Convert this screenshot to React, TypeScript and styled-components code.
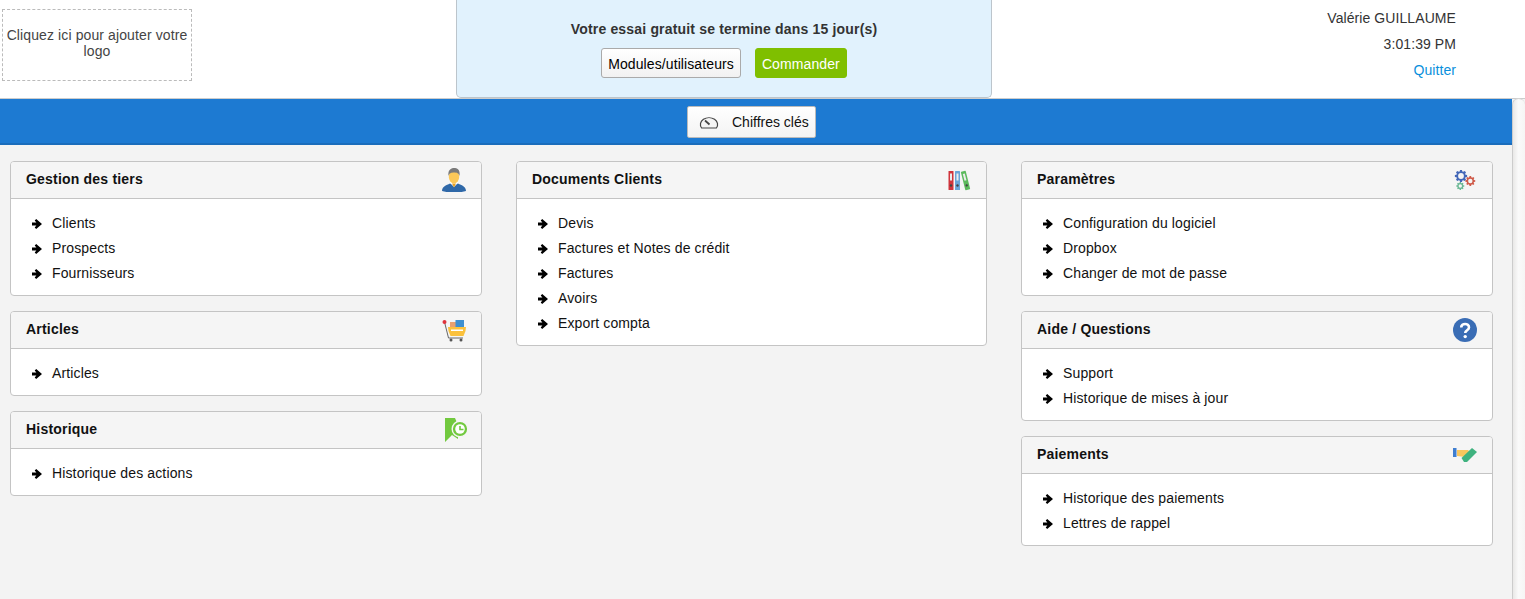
import React from 'react';
import styled, { createGlobalStyle } from 'styled-components';

const GlobalStyle = createGlobalStyle`
  html, body {
    margin: 0;
    padding: 0;
    height: 100%;
    overflow: hidden;
    background: #f3f3f3;
    font-family: "Liberation Sans", Arial, sans-serif;
    font-size: 14px;
    letter-spacing: 0.13px;
    color: #333;
  }
  * { box-sizing: border-box; }
`;

const Page = styled.div`
  width: 1525px;
  height: 599px;
  display: flex;
  flex-direction: column;
`;

const TopBar = styled.header`
  height: 99px;
  flex: none;
  display: flex;
  align-items: flex-start;
  background: #fff;
  border-bottom: 1px solid #ccc;
`;

const LogoSlot = styled.div`
  width: 456px;
  flex: none;
  padding: 9px 0 0 2px;
`;

const LogoBox = styled.div`
  width: 190px;
  height: 72px;
  padding: 17px 0 0;
  border: 1px dashed #bbb;
  text-align: center;
  line-height: 16px;
  letter-spacing: 0.11px;
  color: #444;
`;

const TrialBox = styled.div`
  width: 536px;
  height: 98px;
  flex: none;
  padding-top: 21px;
  background: #e1f2fd;
  border: 1px solid #bcc5cc;
  border-top: none;
  border-radius: 0 0 5px 5px;
  text-align: center;
`;

const TrialText = styled.div`
  font-weight: bold;
  line-height: 16px;
  letter-spacing: 0.175px;
`;

const TrialActions = styled.div`
  display: flex;
  justify-content: center;
  gap: 14px;
  margin-top: 11px;
`;

const TrialButton = styled.button<{ $primary?: boolean }>`
  height: 30px;
  padding: 1px 6px 0;
  font: inherit;
  letter-spacing: 0.1px;
  color: ${(p) => (p.$primary ? '#fff' : '#000')};
  background: ${(p) => (p.$primary ? '#7fbf00' : 'linear-gradient(#fff, #f1f1f1)')};
  border: 1px solid ${(p) => (p.$primary ? '#7fbf00' : '#aaa')};
  border-radius: 3px;
`;

const UserBox = styled.div`
  flex: 1;
  padding: 5px 69px 0 0;
  text-align: right;
  line-height: 26px;
  letter-spacing: 0.08px;
`;

const QuitLink = styled.a`
  color: #0a8fdc;
  text-decoration: none;
`;

const Body = styled.div`
  flex: 1;
  display: flex;
  min-height: 0;
`;

const Main = styled.main`
  flex: 1;
  min-width: 0;
`;

const Scrollbar = styled.div`
  width: 13px;
  flex: none;
  margin-top: -1px;
  background: linear-gradient(90deg, #e9e8e7, #fafafa 45%, #f6f5f4);
  border-left: 1px solid #ccc;
  border-top: 1px solid #d4d4d4;
  border-radius: 7px 7px 0 0;
`;

const KeyBar = styled.div`
  height: 46px;
  display: flex;
  justify-content: center;
  padding: 7px 9px 0 0;
  background: #1d7ad2;
  border-bottom: 2px solid #1a6cbb;
`;

const KeyButton = styled.button`
  width: 129px;
  height: 32px;
  display: flex;
  align-items: center;
  gap: 13px;
  padding: 0 0 0 11px;
  font: inherit;
  letter-spacing: 0;
  color: #111;
  background: linear-gradient(#fff, #f3f3f3);
  border: 1px solid #bbb;
  border-radius: 2px;
`;

const Columns = styled.div`
  display: grid;
  grid-template-columns: 472px 471px 472px;
  column-gap: 34px;
  align-items: start;
  padding: 16px 0 0 10px;
`;

const Column = styled.div`
  display: flex;
  flex-direction: column;
  gap: 15px;
`;

const Panel = styled.section`
  background: #fff;
  border: 1px solid #c4c4c4;
  border-radius: 4px;
  overflow: hidden;
`;

const PanelHead = styled.div`
  height: 37px;
  display: flex;
  align-items: center;
  justify-content: space-between;
  padding: 0 7px 0 15px;
  background: #f5f5f5;
  border-bottom: 1px solid #c4c4c4;
`;

const PanelTitle = styled.h3`
  margin: 0 0 2px;
  font-size: 14px;
  font-weight: bold;
  color: #111;
  letter-spacing: 0.2px;
`;

const IconSlot = styled.div`
  width: 40px;
  height: 30px;
  display: flex;
  align-items: center;
  justify-content: center;
`;

const LinkList = styled.ul`
  list-style: none;
  margin: 0;
  padding: 11px 0 10px 21px;
`;

const LinkItem = styled.li`
  height: 25px;
  display: flex;
  align-items: center;
  gap: 10px;
  color: #111;
`;

const ArrowGlyph = styled.svg`
  margin-top: 2px;
  flex: none;
`;

const ArrowIcon = () => (
  <ArrowGlyph width="10" height="10" viewBox="0 0 10 10">
    <path d="M0 3.6 H4.4 L2.7 1.5 L4.2 0 L10 5 L4.2 10 L2.7 8.5 L4.4 6.4 H0 Z" fill="#000" />
  </ArrowGlyph>
);

const GaugeIcon = () => (
  <svg width="20" height="14" viewBox="0 0 20 14" fill="none">
    <path d="M2.6 13 A8.6 6.8 0 1 1 17.4 13 Z" fill="#f4f4f4" stroke="#444" strokeWidth="1.2" />
    <path d="M6 5.5 L10.5 9.5" stroke="#444" strokeWidth="1.7" />
  </svg>
);

const PersonIcon = () => (
  <svg width="24" height="24" viewBox="0 0 24 24">
    <path d="M0 23 C0 18 6 16.5 8 15.5 L16 15.5 C18 16.5 24 18 24 23 C18 25 6 25 0 23 Z" fill="#2f68a8" />
    <path d="M8 15 L12 19 L16 15 L15 13 L9 13 Z" fill="#fff" />
    <path d="M10 15.5 L12 19.5 L14 15.5 Z" fill="#e8a020" />
    <ellipse cx="12" cy="9" rx="5.2" ry="6.5" fill="#fbc858" />
    <path d="M6.5 8 C5.5 1 10 0 12 0 C15 0 18.5 1.5 17.5 8 C16.5 5 15 4.5 12 4.5 C9 4.5 7.5 5 6.5 8 Z" fill="#7a7a7a" />
  </svg>
);

const BindersIcon = () => (
  <svg width="26" height="21" viewBox="0 0 26 21">
    <rect x="2.5" y="1" width="5" height="19" rx="0.6" fill="#d0343c" />
    <rect x="4" y="3.5" width="2" height="7" fill="#ececec" />
    <circle cx="5" cy="15.5" r="1.2" fill="#444" />
    <rect x="9" y="1" width="5" height="19" rx="0.6" fill="#6aa5d8" />
    <rect x="10.5" y="3.5" width="2" height="7" fill="#ececec" />
    <circle cx="11.5" cy="15.5" r="1.2" fill="#444" />
    <g transform="rotate(-14 19.5 10.5)">
      <rect x="17" y="1" width="5" height="19" rx="0.6" fill="#5cba5c" />
      <rect x="18.5" y="3.5" width="2" height="7" fill="#ececec" />
      <circle cx="19.5" cy="15.5" r="1.2" fill="#444" />
    </g>
  </svg>
);

const gearPoints = (cx: number, cy: number, outer: number, inner: number, teeth: number) => {
  const pts: string[] = [];
  const step = (Math.PI * 2) / teeth;
  for (let i = 0; i < teeth; i++) {
    const a = i * step;
    [
      [inner, a - step * 0.36],
      [outer, a - step * 0.2],
      [outer, a + step * 0.2],
      [inner, a + step * 0.36],
    ].forEach(([r, t]) => {
      pts.push(`${(cx + r * Math.cos(t)).toFixed(2)},${(cy + r * Math.sin(t)).toFixed(2)}`);
    });
  }
  return pts.join(' ');
};

const Gear = ({ cx, cy, r, hole, color }: { cx: number; cy: number; r: number; hole: number; color: string }) => (
  <g>
    <polygon points={gearPoints(cx, cy, r, r * 0.76, 8)} fill={color} />
    <circle cx={cx} cy={cy} r={hole} fill="#f5f5f5" />
  </g>
);

const GearsIcon = () => (
  <svg width="22" height="22" viewBox="0 0 22 22">
    <Gear cx={7} cy={7} r={6.2} hole={2.9} color="#4468b8" />
    <Gear cx={16.3} cy={12} r={5} hole={2.2} color="#cf5a48" />
    <Gear cx={6.3} cy={17} r={4} hole={1.7} color="#6ab894" />
  </svg>
);

const CartIcon = () => (
  <svg width="24" height="23" viewBox="0 0 24 23">
    <path d="M2.5 3 L6.5 19 L21 19" fill="none" stroke="#666" strokeWidth="1" />
    <circle cx="2.5" cy="3" r="2" fill="#e0323c" />
    <rect x="8" y="3" width="6" height="5" fill="#e8a070" />
    <rect x="13.5" y="1" width="8.5" height="7" fill="#3d8fd0" />
    <path d="M6 8 L24 8 L23.5 12 L21.5 17 L8.5 17 L6.5 12 Z" fill="#fbc13c" />
    <rect x="9" y="10.5" width="12" height="1.5" fill="#fff" />
    <circle cx="9" cy="21" r="1.5" fill="#555" />
    <circle cx="19" cy="21" r="1.5" fill="#555" />
  </svg>
);

const BookmarkClockIcon = () => (
  <svg width="28" height="26" viewBox="0 0 28 26">
    <path d="M5 1 L15 1 L18 8 L18 22 L12 18 L5 25 Z" fill="#72c93f" />
    <circle cx="20" cy="12" r="7.8" fill="#72c93f" stroke="#f5f5f5" strokeWidth="1.4" />
    <circle cx="20" cy="12" r="4.8" fill="#fff" />
    <path d="M20 9 L20 12.5 L23.5 12.5" fill="none" stroke="#72c93f" strokeWidth="1.6" />
  </svg>
);

const HelpIcon = () => (
  <svg width="24" height="24" viewBox="0 0 24 24">
    <circle cx="12" cy="12" r="12" fill="#3a6db5" />
    <path d="M8.2 9.4 C8.2 4.8 16 4.8 16 9.4 C16 12.2 12.2 12.2 12.2 15" fill="none" stroke="#fff" strokeWidth="2.6" />
    <circle cx="12.2" cy="18.6" r="1.7" fill="#fff" />
  </svg>
);

const HandshakeIcon = () => (
  <svg width="24" height="16" viewBox="0 0 24 16">
    <rect x="0" y="1" width="3.5" height="9" fill="#3f7ed0" />
    <path d="M4 3 L15 3 L18 6 L12 10 L4 9 Z" fill="#f9c65d" />
    <path d="M8.5 11 L19 1 L24 5 L14 15 L11 15 Z" fill="#3fb27f" />
  </svg>
);

type PanelData = { title: string; icon: React.ReactNode; links: string[] };

const columns: PanelData[][] = [
  [
    { title: 'Gestion des tiers', icon: <PersonIcon />, links: ['Clients', 'Prospects', 'Fournisseurs'] },
    { title: 'Articles', icon: <CartIcon />, links: ['Articles'] },
    { title: 'Historique', icon: <BookmarkClockIcon />, links: ['Historique des actions'] },
  ],
  [
    {
      title: 'Documents Clients',
      icon: <BindersIcon />,
      links: ['Devis', 'Factures et Notes de crédit', 'Factures', 'Avoirs', 'Export compta'],
    },
  ],
  [
    {
      title: 'Paramètres',
      icon: <GearsIcon />,
      links: ['Configuration du logiciel', 'Dropbox', 'Changer de mot de passe'],
    },
    { title: 'Aide / Questions', icon: <HelpIcon />, links: ['Support', 'Historique de mises à jour'] },
    { title: 'Paiements', icon: <HandshakeIcon />, links: ['Historique des paiements', 'Lettres de rappel'] },
  ],
];

export default function App() {
  return (
    <Page>
      <GlobalStyle />
      <TopBar>
        <LogoSlot>
          <LogoBox>Cliquez ici pour ajouter votre logo</LogoBox>
        </LogoSlot>
        <TrialBox>
          <TrialText>Votre essai gratuit se termine dans 15 jour(s)</TrialText>
          <TrialActions>
            <TrialButton>Modules/utilisateurs</TrialButton>
            <TrialButton $primary>Commander</TrialButton>
          </TrialActions>
        </TrialBox>
        <UserBox>
          <div>Valérie GUILLAUME</div>
          <div>3:01:39 PM</div>
          <QuitLink href="#">Quitter</QuitLink>
        </UserBox>
      </TopBar>
      <Body>
        <Main>
          <KeyBar>
            <KeyButton>
              <GaugeIcon />
              Chiffres clés
            </KeyButton>
          </KeyBar>
          <Columns>
            {columns.map((panels, i) => (
              <Column key={i}>
                {panels.map((panel) => (
                  <Panel key={panel.title}>
                    <PanelHead>
                      <PanelTitle>{panel.title}</PanelTitle>
                      <IconSlot>{panel.icon}</IconSlot>
                    </PanelHead>
                    <LinkList>
                      {panel.links.map((link) => (
                        <LinkItem key={link}>
                          <ArrowIcon />
                          {link}
                        </LinkItem>
                      ))}
                    </LinkList>
                  </Panel>
                ))}
              </Column>
            ))}
          </Columns>
        </Main>
        <Scrollbar />
      </Body>
    </Page>
  );
}
